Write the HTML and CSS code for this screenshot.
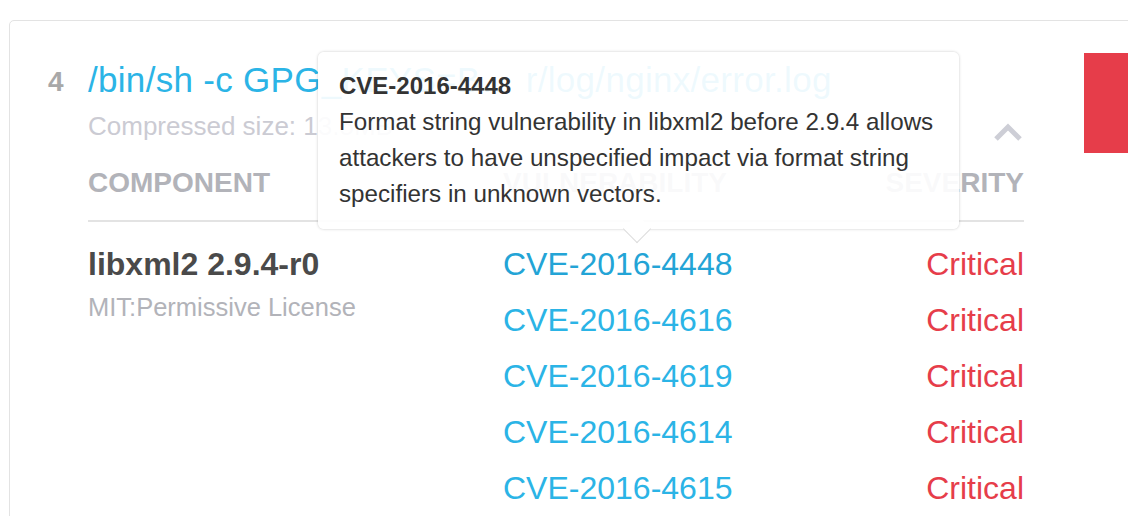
FILE: index.html
```html
<!DOCTYPE html>
<html>
<head>
<meta charset="utf-8">
<link rel="stylesheet" href="styles.css">
</head>
<body>
<div class="card">
  <div class="gutter"><span class="layer-num">4</span></div>
  <div class="main">
    <div class="layer-head">
      <div class="layer-text">
        <div class="layer-cmd">/bin/sh -c GPG_KEYS=B… r/log/nginx/error.log</div>
        <div class="layer-size">Compressed size: 13.5MB</div>
      </div>
      <svg class="chevron" width="30" height="18" viewBox="0 0 30 18"><path d="M3 16 L15 4 L27 16" fill="none" stroke="#cdced6" stroke-width="5"/></svg>
    </div>
    <div class="vulns">
      <div class="th">COMPONENT</div>
      <div class="th">VULNERABILITY</div>
      <div class="th th-right">SEVERITY</div>
      <div class="divider"></div>
      <div class="component">
        <div class="comp-name">libxml2 2.9.4-r0</div>
        <div class="comp-license">MIT:Permissive License</div>
      </div>
      <a class="cve cve-hover">CVE-2016-4448</a><span class="sev">Critical</span>
      <a class="cve">CVE-2016-4616</a><span class="sev">Critical</span>
      <a class="cve">CVE-2016-4619</a><span class="sev">Critical</span>
      <a class="cve">CVE-2016-4614</a><span class="sev">Critical</span>
      <a class="cve">CVE-2016-4615</a><span class="sev">Critical</span>
    </div>
  </div>
  <div class="side"><div class="sev-bar"></div></div>
  <div class="tooltip">
    <div class="tt-title">CVE-2016-4448</div>
    <div class="tt-body">Format string vulnerability in libxml2 before 2.9.4 allows attackers to have unspecified impact via format string specifiers in unknown vectors.</div>
  </div>
</div>
</body>
</html>
```
FILE: styles.css
```css
html, body {
  margin: 0;
  padding: 0;
  background: #fff;
  overflow: hidden;
  height: 516px;
}
body {
  font-family: "Liberation Sans", Arial, sans-serif;
}
.card {
  position: relative;
  margin: 20px 0 0 9px;
  width: 1180px;
  height: 600px;
  border: 1px solid #e3e3e3;
  border-radius: 5px;
  display: flex;
  box-sizing: border-box;
}
.gutter {
  width: 78px;
  padding-top: 41px;
  box-sizing: border-box;
}
.layer-num {
  display: block;
  padding-left: 38px;
  font-size: 28px;
  font-weight: bold;
  line-height: 40px;
  color: #a8a8a8;
}
.main {
  width: 936px;
  padding-top: 39px;
}
.layer-head {
  display: flex;
  align-items: flex-end;
}
.layer-text {
  flex: 1;
  min-width: 0;
}
.layer-cmd {
  font-size: 35px;
  line-height: 40px;
  letter-spacing: 0.3px;
  color: #2bb4e6;
  white-space: nowrap;
}
.layer-size {
  margin-top: 11px;
  font-size: 26px;
  line-height: 30px;
  color: #cbcbd3;
}
.chevron {
  display: block;
  margin: 0 1px 0 0;
}
.vulns {
  margin-top: 25px;
  display: grid;
  grid-template-columns: 415px 1fr auto;
  grid-auto-rows: auto;
}
.th {
  font-size: 28px;
  font-weight: bold;
  line-height: 34px;
  color: #b2b3b9;
  padding-bottom: 20px;
}
.th-right { text-align: right; }
.divider {
  grid-column: 1 / 4;
  height: 2px;
  background: #e3e3e3;
  margin-bottom: 14px;
}
.component {
  grid-column: 1;
  grid-row: 3 / span 5;
}
.comp-name {
  font-size: 32px;
  font-weight: bold;
  line-height: 56px;
  color: #4a4a4a;
}
.comp-license {
  font-size: 25.5px;
  line-height: 30px;
  color: #b2b3b9;
}
.cve {
  grid-column: 2;
  font-size: 32px;
  line-height: 56px;
  color: #2bb4e6;
}
.cve-hover { color: #23a4d6; }
.sev {
  grid-column: 3;
  text-align: right;
  font-size: 32px;
  line-height: 56px;
  color: #e63d4a;
}
.side {
  padding-left: 60px;
  padding-top: 32px;
}
.sev-bar {
  width: 100px;
  height: 100px;
  background: #e63d4a;
}
.tooltip {
  position: absolute;
  left: 308px;
  top: 31px;
  width: 641px;
  height: 177px;
  box-sizing: border-box;
  padding: 16px 14px 0 21px;
  background: rgba(255, 255, 255, 0.92);
  border-radius: 6px;
  box-shadow: 0 0 3px rgba(0, 0, 0, 0.22);
  color: #333;
}
.tooltip::after {
  content: "";
  position: absolute;
  left: 319px;
  bottom: -10px;
  width: 20px;
  height: 20px;
  margin-left: -10px;
  background: #fff;
  border-right: 1px solid #dcdcdc;
  border-bottom: 1px solid #dcdcdc;
  transform: rotate(45deg);
  box-sizing: border-box;
}
.tt-title {
  font-size: 24px;
  font-weight: bold;
  line-height: 36px;
}
.tt-body {
  font-size: 24.2px;
  line-height: 36px;
}
```
